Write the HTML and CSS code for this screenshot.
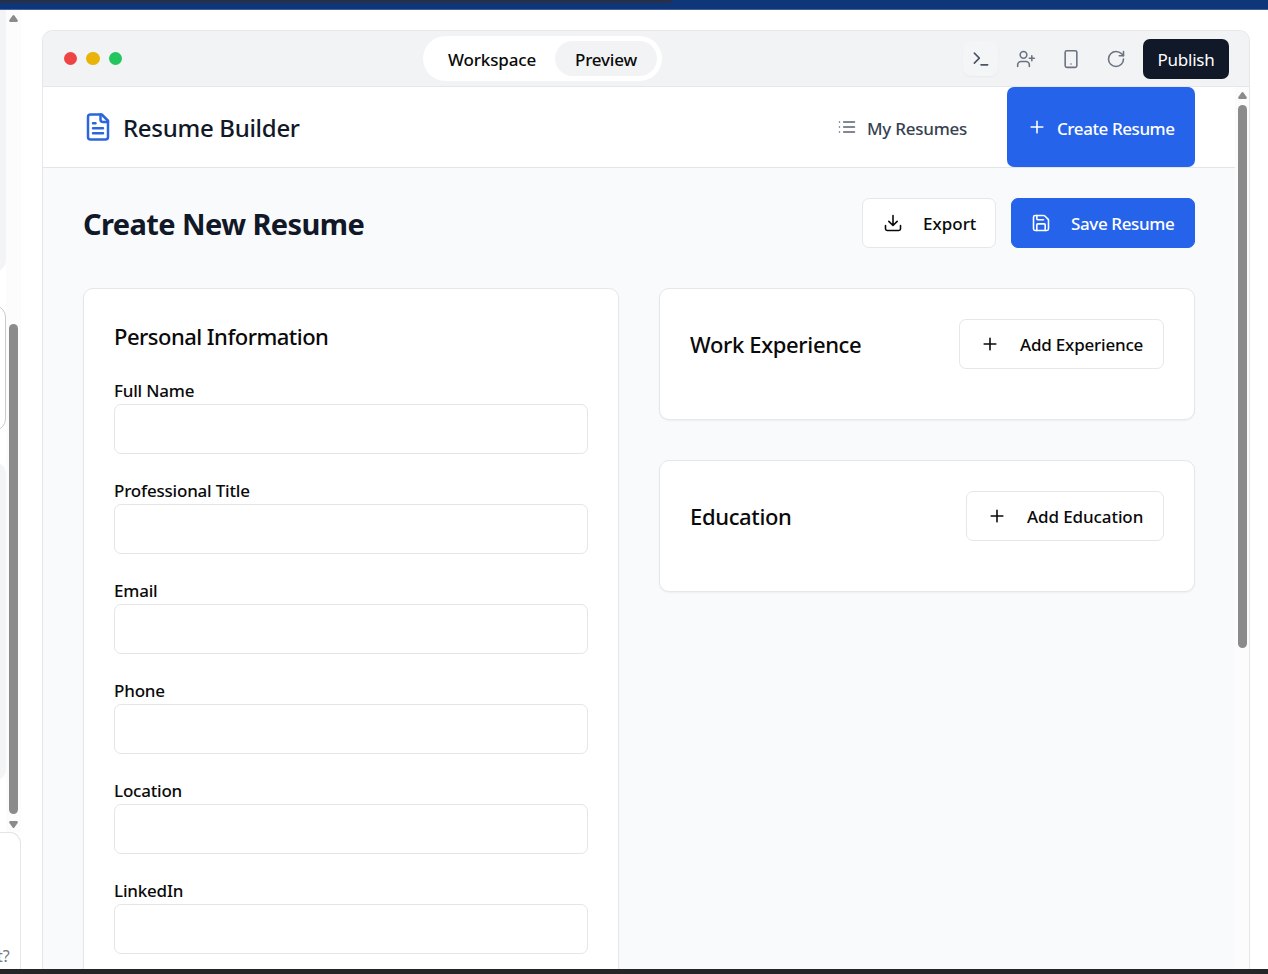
FILE: index.html
```
<!DOCTYPE html>
<html lang="en">
<head>
<meta charset="utf-8">
<title>Resume Builder</title>
<link rel="stylesheet" href="styles.css">
</head>
<body>
<div class="screen">
  <div class="topbar"><div class="topbar-tab"></div></div>
  <div class="workspace">
    <aside class="chat">
      <div class="chat-scroll">
        <div class="chat-messages">
          <div class="message message-first"></div>
          <div class="message message-outlined"></div>
          <div class="message message-last"></div>
        </div>
        <div class="scrollbar chat-scrollbar">
          <svg class="arrow" viewBox="0 0 9 7"><path d="M4.5 0Q5 0 5.4.6L8.8 5.2Q9 7 8 7H1Q0 7 .2 5.2L3.6.6Q4 0 4.5 0Z"/></svg>
          <div class="thumb chat-thumb"></div>
          <svg class="arrow" viewBox="0 0 9 7"><path d="M4.5 7Q5 7 5.4 6.4L8.8 1.8Q9 0 8 0H1Q0 0 .2 1.8L3.6 6.4Q4 7 4.5 7Z"/></svg>
        </div>
      </div>
      <div class="composer"><span>t?</span></div>
    </aside>
    <main class="window">
      <div class="window-bar">
        <div class="lights"><i class="light red"></i><i class="light yellow"></i><i class="light green"></i></div>
        <div class="tabs"><span class="tab workspace-tab"><span class="t-workspace">Workspace</span></span><span class="tab active"><span class="t-preview">Preview</span></span></div>
        <div class="tools">
          <span class="tool terminal"><svg class="icon i20" viewBox="0 0 24 24"><path d="m4 17 6-6-6-6M12 19h8"/></svg></span>
          <span class="tool"><svg class="icon i20" viewBox="0 0 24 24"><path d="M16 21v-2a4 4 0 0 0-4-4H6a4 4 0 0 0-4 4v2M19 8v6M22 11h-6"/><circle cx="9" cy="7" r="4"/></svg></span>
          <span class="tool"><svg class="icon i20" viewBox="0 0 24 24"><rect x="5" y="2" width="14" height="20" rx="2"/><path d="M12 18h.01"/></svg></span>
          <span class="tool"><svg class="icon i20" viewBox="0 0 24 24"><path d="M21 12a9 9 0 1 1-9-9c2.52 0 4.93 1 6.74 2.74L21 8"/><path d="M21 3v5h-5"/></svg></span>
          <span class="publish"><span class="t-publish">Publish</span></span>
        </div>
      </div>
      <div class="viewport">
        <div class="page">
          <header class="site-header">
            <div class="brand"><svg class="icon brand-icon" viewBox="0 0 24 24"><path d="M15 2H6a2 2 0 0 0-2 2v16a2 2 0 0 0 2 2h12a2 2 0 0 0 2-2V7Z"/><path d="M14 2v4a2 2 0 0 0 2 2h4M10 9H8M16 13H8M16 17H8"/></svg><span class="t-brand">Resume Builder</span></div>
            <nav class="nav">
              <a class="nav-link"><svg class="icon i20" viewBox="0 0 24 24"><path d="M3 12h.01M3 18h.01M3 6h.01M8 12h13M8 18h13M8 6h13"/></svg><span class="t-my">My Resumes</span></a>
              <a class="nav-create"><svg class="icon i20" viewBox="0 0 24 24"><path d="M5 12h14M12 5v14"/></svg><span class="t-create">Create Resume</span></a>
            </nav>
          </header>
          <div class="content">
            <div class="title-row">
              <h1><span class="t-h1">Create New Resume</span></h1>
              <div class="actions">
                <button class="btn export"><svg class="icon i20" viewBox="0 0 24 24"><path d="M21 15v4a2 2 0 0 1-2 2H5a2 2 0 0 1-2-2v-4M7 10l5 5 5-5M12 15V3"/></svg><span class="t-export">Export</span></button>
                <button class="btn save"><svg class="icon i20" viewBox="0 0 24 24"><path d="M15.2 3a2 2 0 0 1 1.4.6l3.8 3.8a2 2 0 0 1 .6 1.4V19a2 2 0 0 1-2 2H5a2 2 0 0 1-2-2V5a2 2 0 0 1 2-2z"/><path d="M17 21v-7a1 1 0 0 0-1-1H8a1 1 0 0 0-1 1v7M7 3v4a1 1 0 0 0 1 1h7"/></svg><span class="t-save">Save Resume</span></button>
              </div>
            </div>
            <div class="columns">
              <section class="card personal">
                <h2><span class="t-personal">Personal Information</span></h2>
                <div class="field"><label>Full Name</label><input type="text"></div>
                <div class="field"><label>Professional Title</label><input type="text"></div>
                <div class="field"><label>Email</label><input type="text"></div>
                <div class="field"><label>Phone</label><input type="text"></div>
                <div class="field"><label>Location</label><input type="text"></div>
                <div class="field"><label>LinkedIn</label><input type="text"></div>
              </section>
              <div class="side">
                <section class="card section">
                  <h2><span class="t-work">Work Experience</span></h2>
                  <button class="btn add-exp"><svg class="icon i20" viewBox="0 0 24 24"><path d="M5 12h14M12 5v14"/></svg><span class="t-addexp">Add Experience</span></button>
                </section>
                <section class="card section">
                  <h2><span class="t-edu">Education</span></h2>
                  <button class="btn add-edu"><svg class="icon i20" viewBox="0 0 24 24"><path d="M5 12h14M12 5v14"/></svg><span class="t-addedu">Add Education</span></button>
                </section>
              </div>
            </div>
          </div>
        </div>
        <div class="scrollbar page-scrollbar">
          <svg class="arrow" viewBox="0 0 9 7"><path d="M4.5 0Q5 0 5.4.6L8.8 5.2Q9 7 8 7H1Q0 7 .2 5.2L3.6.6Q4 0 4.5 0Z"/></svg>
          <div class="thumb page-thumb"></div>
        </div>
      </div>
    </main>
  </div>
  <div class="bottombar"></div>
</div>
</body>
</html>
```
FILE: styles.css
```
* { box-sizing: border-box; }
body { margin: 0; background: #fff; overflow: hidden; font-family: "Noto Sans", "Open Sans", sans-serif; font-size: 17px; font-weight: 500; color: #0a0a0a; }
h1, h2 { margin: 0; }
.screen { width: 1268px; height: 974px; display: flex; flex-direction: column; overflow: hidden; }
.topbar { height: 10px; flex: none; background: #10367a; border-bottom: 1px solid #43619a; }
.topbar-tab { width: 672px; height: 3px; background: #263149; border-bottom-right-radius: 4px; }
.bottombar { height: 5px; flex: none; background: #242526; }
.workspace { flex: 1; min-height: 0; display: flex; }
.chat { width: 21px; flex: none; display: flex; flex-direction: column; overflow: hidden; }
.chat-scroll { height: 822px; display: flex; flex: none; }
.chat-messages { width: 6px; overflow: hidden; }
.message { width: 40px; margin-left: -34px; background: #f3f4f6; border-radius: 0 0 12px 0; }
.message-first { height: 262px; }
.message-outlined { height: 126px; margin-top: 33px; background: #fff; border: 1px solid #c9cacc; border-radius: 12px; }
.message-last { height: 319px; margin-top: 31px; border-radius: 12px; }
.scrollbar { width: 15px; background: #fcfcfc; display: flex; flex-direction: column; align-items: center; flex: none; }
.arrow { width: 9px; height: 7px; fill: #8b8b8b; flex: none; }
.chat-scrollbar { padding-top: 5px; }
.thumb { width: 9px; border-radius: 5px; background: #8b8b8b; flex: none; }
.chat-thumb { height: 490px; margin: 302px 0 7px; }
.composer { flex: 1; border: 1px solid #e5e5e5; border-left: 0; border-radius: 0 11px 0 0; border-bottom: 0; display: flex; align-items: flex-end; padding-bottom: 2px; color: #757980; font-size: 16px; font-weight: 400; line-height: 22px; }
.composer span { margin-left: -3px; }
.window { width: 1208px; margin: 20px 0 0 21px; border: 1px solid #e5e7eb; border-bottom: 0; border-radius: 11px 11px 0 0; display: flex; flex-direction: column; overflow: hidden; }
.window-bar { height: 56px; flex: none; background: #f2f3f5; border-bottom: 1px solid #e5e7eb; display: grid; grid-template-columns: 380px 239px 1fr; align-items: center; }
.lights { display: flex; gap: 9px; padding-left: 20.5px; }
.light { width: 13.5px; height: 13.5px; border-radius: 50%; }
.red { background: #ef4444; }
.yellow { background: #e9b308; }
.green { background: #22c55e; }
.tabs { height: 45px; background: #fff; border-radius: 23px; display: flex; align-items: center; padding: 0 5px 0 25px; justify-content: space-between; }
.tab { height: 35px; display: flex; align-items: center; padding-top: 2px; }
.active { width: 102px; justify-content: center; background: #f2f3f5; border-radius: 18px; }
.tools { display: flex; align-items: center; justify-content: flex-end; padding-right: 20px; color: #6b7280; }
.tool { width: 35px; height: 35px; margin-right: 10px; display: flex; align-items: center; justify-content: center; border-radius: 8px; }
.terminal { color: #4b5563; background: #f4f5f7; box-shadow: 0 1px 2px #0000000a; }
.publish { width: 86px; height: 40px; background: #111827; border-radius: 7px; color: #fff; display: flex; align-items: center; justify-content: center; font-weight: 400; padding-top: 1px; }
.icon { fill: none; stroke: currentColor; stroke-width: 1.9; stroke-linecap: round; stroke-linejoin: round; flex: none; }
.i20 { width: 20px; height: 20px; }
.viewport { flex: 1; min-height: 0; display: flex; }
.page { flex: 1; background: #f9fafc; overflow: hidden; }
.page-scrollbar { width: 14px; padding: 5px 0 0 1px; align-items: flex-start; padding-left: 3px; }
.page-thumb { height: 543px; margin-top: 6px; }
.site-header { height: 81px; background: #fff; border-bottom: 1px solid #e2e5e9; padding: 0 40px; display: flex; justify-content: space-between; }
.brand { display: flex; align-items: center; gap: 10px; font-size: 24px; color: #111827; }
.brand span { padding-top: 1px; }
.brand-icon { width: 30px; height: 30px; color: #2b66dd; stroke-width: 2; }
.nav { display: flex; }
.nav-link { display: flex; align-items: center; gap: 10px; margin-right: 40px; color: #374151; }
.nav-link .icon { color: #5a6270; }
.nav-create { width: 188px; height: 80px; background: #2563eb; color: #fff; border-radius: 7px; display: flex; align-items: center; gap: 10px; padding-left: 20px; font-weight: 550; }
.nav .icon { margin-top: -1px; }
.nav span { padding-top: 2px; }
.content { padding: 30px 40px; }
.title-row { height: 50px; display: flex; align-items: center; justify-content: space-between; }
h1 { font-size: 29px; font-weight: 700; color: #111827; line-height: 40px; padding-top: 2px; }
.actions { display: flex; gap: 15px; }
.btn { height: 50px; border: 1px solid #e5e7eb; border-radius: 7px; background: #fff; padding: 0 0 0 20px; font: inherit; color: #0a0a0a; display: flex; align-items: center; gap: 20px; flex: none; }
.btn .icon { margin-top: 0; }
.btn > span { padding-top: 1px; }
.export { width: 134px; }
.save { width: 184px; background: #2563eb; border-color: #2563eb; color: #fff; font-weight: 550; padding-left: 19px; }
.add-exp { width: 205px; }
.add-edu { width: 198px; }
.columns { display: grid; grid-template-columns: 536px 536px; gap: 40px; padding-top: 40px; align-items: start; }
.card { background: #fff; border: 1px solid #e5e7eb; border-radius: 10px; padding: 30px; box-shadow: 0 1px 2px #0000000d; }
h2 { font-size: 22px; font-weight: 500; line-height: 35px; }
.personal { height: 900px; }
.field { height: 100px; display: flex; flex-direction: column; }
.personal h2 { height: 50px; }
.field label { height: 35px; line-height: 43px; letter-spacing: -0.2px; }
.field input { width: 100%; height: 50px; border: 1px solid #e5e5e5; border-radius: 7px; background: #fff; }
.side { display: grid; gap: 40px; }
.section { height: 132px; display: flex; align-items: flex-start; justify-content: space-between; }
.section h2 { padding-top: 8px; }
span[class^="t-"] { white-space: nowrap; }
.t-workspace { letter-spacing: -0.15px; }
.t-preview { letter-spacing: -0.2px; }
.t-publish { letter-spacing: -0.25px; }
.t-brand { letter-spacing: -0.3px; }
.t-my { letter-spacing: -0.25px; }
.t-create { letter-spacing: -0.42px; }
.t-h1 { letter-spacing: -0.58px; }
.t-save { letter-spacing: -0.37px; }
.t-personal { letter-spacing: -0.52px; }
.t-work, .t-edu { letter-spacing: -0.35px; }
.t-addexp { letter-spacing: -0.2px; }
.t-addedu { letter-spacing: -0.1px; }
```
